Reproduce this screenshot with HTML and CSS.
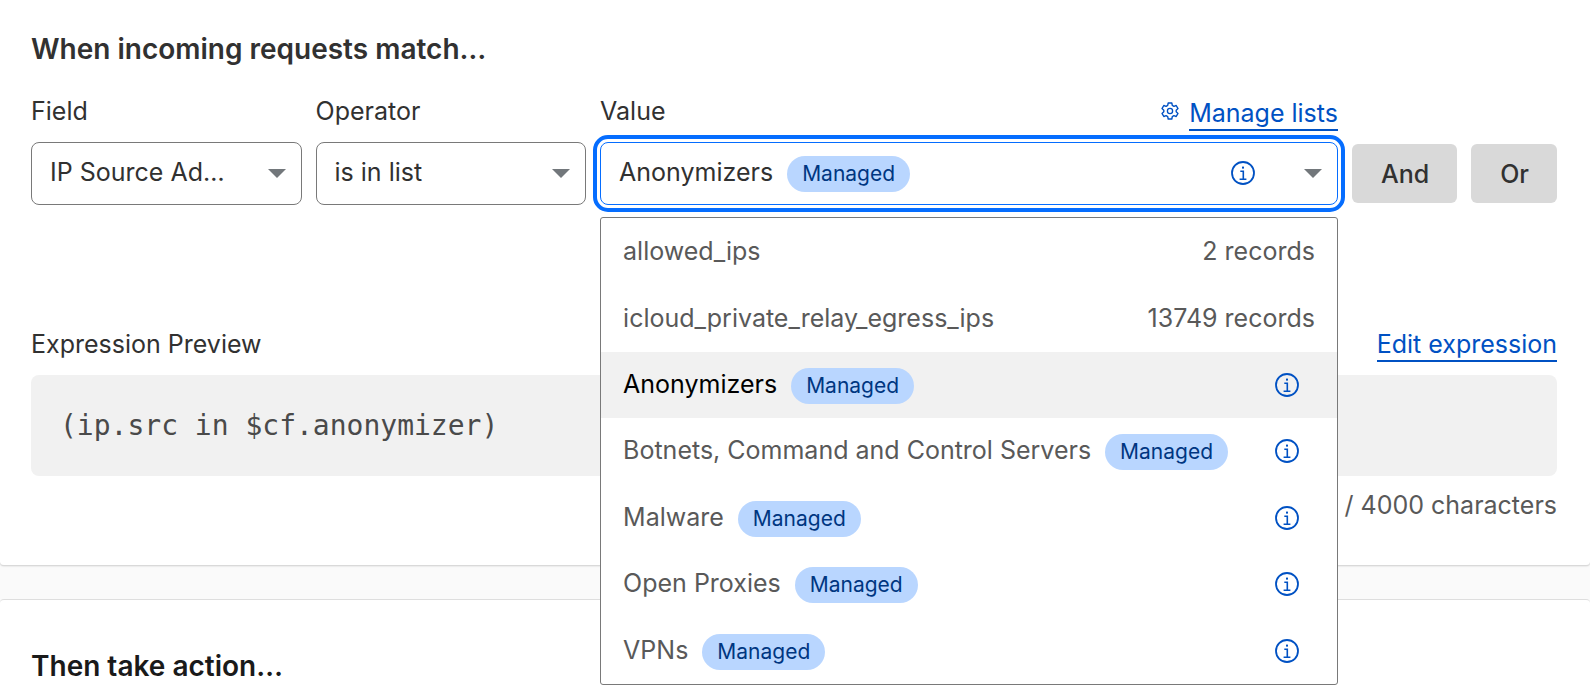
FILE: index.html
```html
<!DOCTYPE html>
<html lang="en">
<head>
  <meta charset="UTF-8" />
  <meta name="viewport" content="width=device-width, initial-scale=1.0" />
  <title>Create rule</title>
  <link rel="stylesheet" href="styles.css">
</head>
<body>
  <!-- shared icons -->
  <svg class="icon-defs" aria-hidden="true">
    <symbol id="icon-info" viewBox="0 0 24 24">
      <circle cx="12" cy="12" r="11" fill="none" stroke="currentColor" stroke-width="1.8" />
      <path d="M9.3 10.3h3V18M8.6 18.3h6.8" fill="none" stroke="currentColor" stroke-width="1.6" />
      <rect x="11" y="5.6" width="2" height="2" fill="currentColor" />
    </symbol>
    <symbol id="icon-gear" viewBox="0 0 18 18">
      <path d="M7.2 1h3.6l.5 2.4 1.6.9 2.3-.8L17 6.600l-1.800 1.600v1.600l1.800 1.600-1.800 3.100-2.300-.8-1.600.9-.5 2.400H7.200l-.5-2.400-1.600-.9-2.300.8L1 11.400l1.800-1.600V8.200L1 6.600l1.800-3.100 2.300.8 1.600-.9z" fill="none" stroke="currentColor" stroke-width="1.4" stroke-linejoin="round" />
      <circle cx="9" cy="9" r="2.6" fill="none" stroke="currentColor" stroke-width="1.3" />
    </symbol>
  </svg>

  <section class="panel">
    <h2>When incoming requests match…</h2>

    <div class="rule-row">
      <div class="field">
        <div class="field-head"><label for="field">Field</label></div>
        <select id="field" class="control">
          <option>IP Source Address</option>
        </select>
      </div>

      <div class="field">
        <div class="field-head"><label for="operator">Operator</label></div>
        <select id="operator" class="control">
          <option>is in list</option>
        </select>
      </div>

      <div class="field">
        <div class="field-head">
          <label for="value">Value</label>
          <div class="manage">
            <svg class="gear"><use href="#icon-gear" /></svg>
            <a class="link" href="#">Manage lists</a>
          </div>
        </div>
        <button id="value" class="control combo" type="button" aria-haspopup="listbox" aria-expanded="true" aria-controls="lists">
          <span>Anonymizers</span>
          <span class="badge">Managed</span>
          <svg class="info"><use href="#icon-info" /></svg>
        </button>

        <ul id="lists" class="menu" role="listbox" aria-label="Value">
          <li role="option"><span>allowed_ips</span><span class="records">2 records</span></li>
          <li role="option"><span>icloud_private_relay_egress_ips</span><span class="records">13749 records</span></li>
          <li role="option" class="selected" aria-selected="true"><span>Anonymizers</span><span class="badge">Managed</span><svg class="info"><use href="#icon-info" /></svg></li>
          <li role="option"><span>Botnets, Command and Control Servers</span><span class="badge">Managed</span><svg class="info"><use href="#icon-info" /></svg></li>
          <li role="option"><span>Malware</span><span class="badge">Managed</span><svg class="info"><use href="#icon-info" /></svg></li>
          <li role="option"><span>Open Proxies</span><span class="badge">Managed</span><svg class="info"><use href="#icon-info" /></svg></li>
          <li role="option"><span>VPNs</span><span class="badge">Managed</span><svg class="info"><use href="#icon-info" /></svg></li>
        </ul>
      </div>

      <button class="btn" type="button">And</button>
      <button class="btn" type="button">Or</button>
    </div>

    <div class="preview-head">
      <span>Expression Preview</span>
      <a class="link" href="#">Edit expression</a>
    </div>
    <pre class="preview">(ip.src in $cf.anonymizer)</pre>
    <p class="count">26 / 4000 characters</p>
  </section>

  <section class="panel">
    <h2 class="dark">Then take action…</h2>
  </section>
</body>
</html>
```
FILE: styles.css
```css
* {
  box-sizing: border-box;
}
body {
  margin: 0;
  font-family: Inter, "Liberation Sans", sans-serif;
  font-size: 25px;
  line-height: 32px;
  color: #313131;
  background-color: #fafafa;
}
.icon-defs {
  display: none;
}
.panel {
  padding: 31px 33px 44px 31px;
  background-color: #fff;
  border-bottom: 1px solid #d9d9d9;
  border-radius: 0 0 4px 4px;
  box-shadow: 0 0 2px rgba(0, 0, 0, 0.2);
}
.panel + .panel {
  margin-top: 33px;
  padding-top: 48px;
  padding-bottom: 16px;
  border-top: 1px solid #dedede;
  border-bottom: none;
  border-radius: 4px 4px 0 0;
  box-shadow: none;
}
h2 {
  margin: 0;
  font-size: 28px;
  line-height: 36px;
  font-weight: 600;
}
h2.dark {
  color: #1a1a1a;
}

/* rule builder */
.rule-row {
  display: grid;
  grid-template-columns: minmax(0, 11fr) minmax(0, 11fr) minmax(0, 30fr) auto auto;
  gap: 14px;
  align-items: end;
  margin-top: 28px;
}
.field {
  position: relative;
}
.field-head {
  display: flex;
  justify-content: space-between;
  height: 47px;
}
.manage {
  display: flex;
  align-items: flex-start;
  gap: 10px;
}
.gear {
  width: 18px;
  height: 18px;
  margin-top: 7px;
  color: #0051c3;
}
.link {
  color: #0051c3;
  text-decoration: none;
  border-bottom: 2px solid #0051c3;
}
.manage .link {
  margin-top: 2px;
}
.control {
  display: flex;
  align-items: center;
  width: 100%;
  height: 63px;
  padding: 0 72px 4px 18px;
  font: inherit;
  color: inherit;
  text-align: left;
  text-overflow: ellipsis;
  background: #fff url("data:image/svg+xml,%3Csvg xmlns='http://www.w3.org/2000/svg' width='18' height='9'%3E%3Cpath d='M0 0h18L9 9z' fill='%2372777b'/%3E%3C/svg%3E") no-repeat right 15px center;
  border: 1px solid #797979;
  border-radius: 8px;
  appearance: none;
}
.combo {
  gap: 14px;
  padding-right: 82px;
  border-color: #056dff;
  outline: 4px solid #056dff;
  outline-offset: 3px;
}
.badge {
  padding: 0 15px;
  margin-top: 4px;
  font-size: 21px;
  line-height: 36px;
  color: #003681;
  background-color: #b9d6ff;
  border-radius: 18px;
}
.info {
  width: 24px;
  height: 24px;
  margin-top: 2px;
  margin-left: auto;
  color: #0051c3;
}
.btn {
  height: 59px;
  margin-bottom: 2px;
  padding: 0 28px 0 29px;
  font: inherit;
  font-weight: 500;
  color: inherit;
  background-color: #d9d9d9;
  border: none;
  border-radius: 6px;
}

/* list dropdown */
.menu {
  position: absolute;
  top: 100%;
  left: 0;
  right: 0;
  display: grid;
  grid-auto-rows: 1fr;
  height: 468px;
  margin: 12px 0 0;
  padding: 1px 0 0;
  list-style: none;
  color: #595959;
  background-color: #fff;
  border: 1px solid #797979;
  border-radius: 3px;
}
.menu li {
  display: flex;
  align-items: center;
  gap: 14px;
  padding: 0 38px 2px 22px;
}
.menu .selected {
  color: #000;
  background-color: #f1f1f1;
}
.menu .records {
  margin-left: auto;
  margin-right: -16px;
}

/* expression preview */
.preview-head {
  display: flex;
  justify-content: space-between;
  margin-top: 123px;
}
.preview {
  margin: 13px 0 0;
  padding: 32px 29px;
  font-family: "DejaVu Sans Mono", monospace;
  font-size: 28px;
  line-height: 37px;
  color: #4a4a4a;
  background-color: #f1f1f1;
  border-radius: 8px;
}
.count {
  margin: 13px 0 0;
  color: #595959;
  text-align: right;
}
```
